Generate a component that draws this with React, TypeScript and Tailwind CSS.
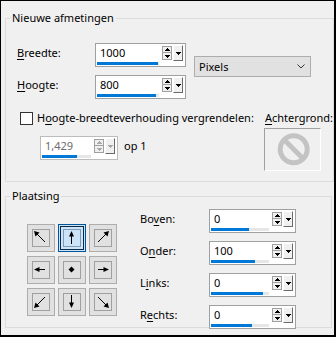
import clsx from "clsx";

type Dir = "nw" | "n" | "ne" | "w" | "c" | "e" | "sw" | "s" | "se";

function Tri({ down = false, color = "#000" }: { down?: boolean; color?: string }) {
  return (
    <svg width="5" height="3" viewBox="0 0 5 3" className="block">
      <path
        d={down ? "M0 0h5v1H4v1H3v1H2V2H1V1H0z" : "M2 0h1v1h1v1h1v1H0V2h1V1h1z"}
        fill={color}
      />
    </svg>
  );
}

function Spinner({ disabled }: { disabled?: boolean }) {
  const c = disabled ? "#a8a8a8" : "#000";
  return (
    <div className="flex gap-[1px] pr-[2px] pt-[1px]">
      <div className="mt-[1px] flex w-[10px] flex-col">
        <div className="flex h-[7px] items-center justify-center border border-[#a0a0a0] bg-[#f0f0f0]">
          <Tri color={c} />
        </div>
        <div className="flex h-[7px] items-center justify-center border border-t-0 border-[#a0a0a0] bg-[#f0f0f0]">
          <Tri down color={c} />
        </div>
      </div>
      <div className="flex h-[16px] w-[10px] items-center justify-center border border-t-white border-l-white border-r-[#696969] border-b-[#696969] bg-[#f0f0f0]">
        <Tri down color={c} />
      </div>
    </div>
  );
}

function SpinBox({ value, w, bar, disabled }: { value: string; w: string; bar: string; disabled?: boolean }) {
  return (
    <div className={clsx("flex h-[24px] border bg-white", w, disabled ? "border-[#bcbcbc]" : "border-[#a0a0a0]")}>
      <div className="flex flex-1 flex-col pl-[1px] pr-[3px] pt-[1px]">
        <span className={clsx("pl-[3px] leading-[16px]", disabled ? "text-[#6d6d6d]" : "text-black")}>{value}</span>
        <div className="mt-[1px] h-[3px] bg-[#e6e6e6]">
          <div className={clsx("h-[3px] bg-[#0078d7]", bar)} />
        </div>
      </div>
      <Spinner disabled={disabled} />
    </div>
  );
}

function Arrow({ dir }: { dir: Dir }) {
  const shapes: Record<Dir, { line?: string; head: string }> = {
    nw: { line: "M3 3L12 12", head: "M1 1L6.5 2.5L2.5 6.5Z" },
    n: { line: "M7.5 4V14", head: "M7.5 1L10 6.5H5Z" },
    ne: { line: "M12 3L3 12", head: "M14 1L12.5 6.5L8.5 2.5Z" },
    w: { line: "M4 7.5H12", head: "M1 7.5L6.5 5V10Z" },
    c: { head: "M7.5 4.5L10.5 7.5L7.5 10.5L4.5 7.5Z" },
    e: { line: "M3 7.5H11", head: "M14 7.5L8.5 5V10Z" },
    sw: { line: "M12 3L3 12", head: "M1 14L2.5 8.5L6.5 12.5Z" },
    s: { line: "M7.5 1V11", head: "M7.5 14L10 8.5H5Z" },
    se: { line: "M3 3L12 12", head: "M14 14L8.5 12.5L12.5 8.5Z" },
  };
  const s = shapes[dir];
  return (
    <svg width="16" height="16" viewBox="0 0 16 16" className="block">
      {s.line && <path d={s.line} stroke="#000" strokeWidth="1" fill="none" />}
      <path d={s.head} fill="#000" />
    </svg>
  );
}

function PosButton({ dir, selected }: { dir: Dir; selected?: boolean }) {
  if (selected) {
    return (
      <div className="h-[28px] w-[28px] border border-[#005499] bg-[#cce4f7] p-[1px]">
        <div className="h-full w-full border border-[#0b2a48] p-[2px]">
          <div className="h-[18px] w-[18px] border border-[#7f9bb5] bg-[#cce4f7]">
            <Arrow dir={dir} />
          </div>
        </div>
      </div>
    );
  }
  return (
    <div className="h-[28px] w-[28px] border border-[#adadad] bg-[#e1e1e1] p-[4px]">
      <div className="h-[18px] w-[18px] border border-[#a0a0a0] bg-[#e1e1e1]">
        <Arrow dir={dir} />
      </div>
    </div>
  );
}

const dirs: Dir[] = ["nw", "n", "ne", "w", "c", "e", "sw", "s", "se"];

const margins = [
  { pre: "Bo", key: "v", post: "en:", value: "0", bar: "w-[38px]" },
  { pre: "O", key: "n", post: "der:", value: "100", bar: "w-[44px]" },
  { pre: "L", key: "i", post: "nks:", value: "0", bar: "w-[52px]" },
  { pre: "R", key: "e", post: "chts:", value: "0", bar: "w-[41px]" },
];

export default function App() {
  return (
    <div className="h-[337px] w-[336px] overflow-hidden border-l border-t border-r-2 border-b-2 border-black bg-[#f0f0f0] font-['Noto_Sans',sans-serif] text-[11px] text-black">
      <fieldset className="ml-[4px] mt-[9px] h-[172px] w-[327px] border border-[#dcdcdc]">
        <legend className="ml-[4px] px-[2px] leading-[16px]">Nieuwe afmetingen</legend>
        <div className="pl-[11px] pt-[17px]">
          <div className="flex items-start">
            <div className="flex flex-col gap-[8px]">
              <div className="flex items-start">
                <span className="mt-[2px] w-[78px] leading-[16px]">
                  <u className="underline-offset-2">B</u>reedte:
                </span>
                <SpinBox value="1000" w="w-[91px]" bar="w-[61px]" />
              </div>
              <div className="flex items-start">
                <span className="mt-[2px] w-[78px] leading-[16px]">
                  <u className="underline-offset-2">H</u>oogte:
                </span>
                <SpinBox value="800" w="w-[91px]" bar="w-[59px]" />
              </div>
            </div>
            <div className="ml-[8px] mt-[13px] flex h-[21px] w-[117px] items-center justify-between border border-[#adadad] bg-[#e1e1e1] pl-[4px] pr-[5px]">
              <span className="leading-[16px]">Pixels</span>
              <svg width="8" height="5" viewBox="0 0 8 5" className="block">
                <path d="M0.5 0.5L4 4L7.5 0.5" stroke="#333" fill="none" />
              </svg>
            </div>
          </div>

          <div className="mt-[11px] flex items-start">
            <div className="w-[247px]">
              <div className="flex h-[16px] items-center pl-[3px]">
                <div className="h-[13px] w-[13px] border border-[#333333] bg-white" />
                <span className="ml-[4px] leading-[16px]">
                  H<u className="underline-offset-2">o</u>ogte-breedteverhouding vergrendelen:
                </span>
              </div>
              <div className="mt-[10px] flex items-start pl-[23px]">
                <SpinBox value="1,429" w="w-[78px]" bar="w-[35px]" disabled />
                <span className="ml-[6px] mt-[2px] leading-[16px]">op 1</span>
              </div>
            </div>
            <div className="flex flex-col">
              <span className="pl-[1px] leading-[16px]">
                <u className="underline-offset-2">A</u>chtergrond:
              </span>
              <div className="mt-[2px] h-[43px] w-[57px] border border-t-[#a0a0a0] border-l-[#a0a0a0] border-r-white border-b-white">
                <svg width="55" height="41" viewBox="0 0 55 41" className="block">
                  <circle cx="28.7" cy="20.3" r="13.5" stroke="#c3c3c3" strokeWidth="5" fill="none" />
                  <path d="M19.2 10.8L38.2 29.8" stroke="#c3c3c3" strokeWidth="5" />
                </svg>
              </div>
            </div>
          </div>
        </div>
      </fieldset>

      <fieldset className="ml-[4px] mt-[6px] h-[140px] w-[327px] border border-[#dcdcdc]">
        <legend className="ml-[4px] px-[2px] leading-[16px]">Plaatsing</legend>
        <div className="flex items-start pl-[21px]">
          <div className="mt-[20px] grid grid-cols-[repeat(3,28px)] gap-x-[3px] gap-y-[4px]">
            {dirs.map((d) => (
              <PosButton key={d} dir={d} selected={d === "n"} />
            ))}
          </div>
          <div className="ml-[23px] mt-[5px] flex flex-col gap-[8px]">
            {margins.map((m) => (
              <div key={m.pre + m.post} className="flex items-start">
                <span className="mt-[2px] w-[69px] leading-[16px]">
                  {m.pre}
                  <u className="underline-offset-2">{m.key}</u>
                  {m.post}
                </span>
                <SpinBox value={m.value} w="w-[87px]" bar={m.bar} />
              </div>
            ))}
          </div>
        </div>
      </fieldset>
    </div>
  );
}
